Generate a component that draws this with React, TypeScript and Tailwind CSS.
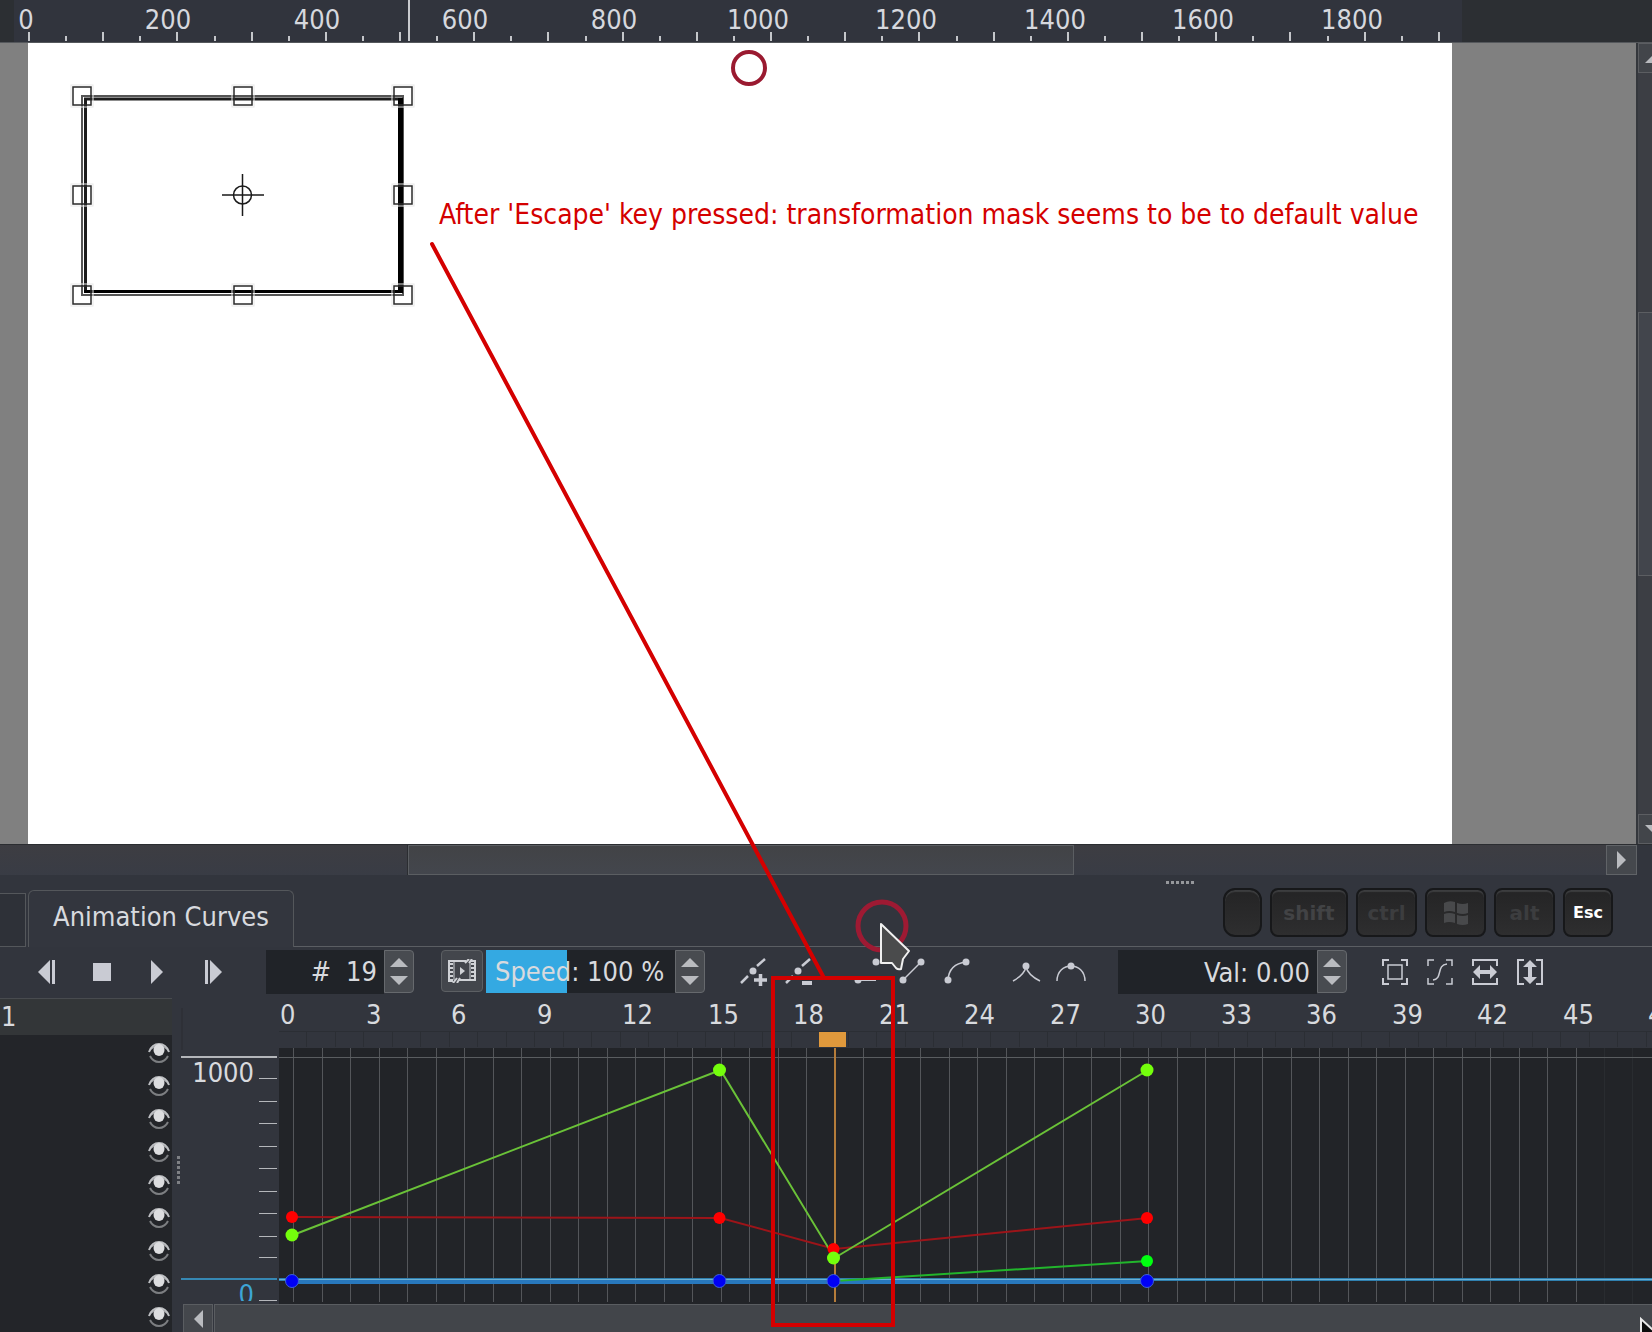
import type { ReactNode } from "react";

const range = (n: number) => Array.from({ length: n }, (_, i) => i);

/* ---------- horizontal canvas ruler ---------- */

const RULER_ORIGIN = 29;
const RULER_STEP = 742 / 20;

function Ruler() {
  return (
    <header className="h-[43px] shrink-0 overflow-hidden border-b border-[#55585c] bg-[#2c2f33]">
      <svg className="block h-full w-full" role="img" aria-label="Horizontal ruler">
        <rect x="14" y="0" width="1448" height="42" fill="#31343d" />
        {range(39).map((i) => {
          const x = Math.round(RULER_ORIGIN + i * RULER_STEP);
          const top = i % 2 === 0 ? 32 : 36;
          return <rect key={i} x={x - 1} y={top} width="2" height={41 - top} fill="#c4c6ca" />;
        })}
        {range(10).map((i) => {
          const value = i * 200;
          const shift = value === 0 ? 3 : value < 1000 ? 9 : 13;
          return (
            <text
              key={value}
              x={Math.round(RULER_ORIGIN + i * 4 * RULER_STEP) - shift}
              y="29"
              textAnchor="middle"
              fill="#d6d8de"
              className="text-[27px]"
            >
              {value}
            </text>
          );
        })}
        <rect x="408" y="0" width="2" height="41" fill="#c9cbcf" />
      </svg>
    </header>
  );
}

/* ---------- canvas ---------- */

function TransformBox() {
  const handles = [
    [82, 96], [243, 96], [403, 96],
    [82, 195], [403, 195],
    [82, 295], [243, 295], [403, 295],
  ];
  return (
    <svg viewBox="28 43 400 280" width="400" height="280" className="absolute top-0 left-0" aria-label="Transformation mask">
      <rect x="82" y="96" width="321" height="199" fill="none" stroke="#555" strokeWidth="2" />
      <path d="M84 99H402" stroke="#1c1c1c" strokeWidth="3" />
      <path d="M85.500 98V293" stroke="#1c1c1c" strokeWidth="3" />
      <path d="M400.500 98V293" stroke="#000" strokeWidth="5" />
      <path d="M84 291.500H402" stroke="#000" strokeWidth="3" />
      {handles.map(([x, y]) => (
        <g key={`${x}-${y}`} fill="none">
          <rect x={x - 11} y={y - 11} width="22" height="22" stroke="#e8e8e8" strokeWidth="1" />
          <rect x={x - 9} y={y - 9} width="18" height="18" stroke="#2a2a2a" strokeWidth="1.500" />
        </g>
      ))}
      <g fill="none" stroke="#1a1a1a" strokeWidth="1.500">
        <circle cx="242.500" cy="195" r="9" />
        <path d="M222 195H264M242.500 174V216" />
      </g>
    </svg>
  );
}

function Triangle({ dir, className }: { dir: "up" | "down" | "left" | "right"; className?: string }) {
  const d = {
    up: "M0 9L9 0L18 9Z",
    down: "M0 0L9 9L18 0Z",
    left: "M9 0L0 9L9 18Z",
    right: "M0 0L9 9L0 18Z",
  }[dir];
  const vertical = dir === "up" || dir === "down";
  return (
    <svg width={vertical ? 18 : 9} height={vertical ? 9 : 18} className={className} aria-hidden="true">
      <path d={d} fill="#b9bbbf" />
    </svg>
  );
}

function Canvas() {
  return (
    <main className="flex min-h-[801px] flex-1 overflow-hidden bg-[#808080]">
      <div className="relative ml-7 w-[1424px] shrink-0 bg-white">
        <TransformBox />
        <p className="absolute top-[156px] left-[411px] text-[28px] leading-8 whitespace-nowrap text-[#d40000]">
          After 'Escape' key pressed: transformation mask seems to be to default value
        </p>
      </div>
      <div className="min-w-0 flex-1" />
      <div className="w-4 shrink-0 overflow-hidden border-l-2 border-[#34373c] bg-[#3c3e44]">
        <div className="flex h-full w-8 flex-col">
          <button type="button" aria-label="Scroll up" className="flex h-[30px] items-center border border-[#5c5e62] bg-[#42454a] pl-[6px]">
            <Triangle dir="up" />
          </button>
          <div className="h-[239px]" />
          <div className="h-[264px] border border-[#5c5e62] bg-[#42454c]" />
          <div className="flex-1" />
          <button type="button" aria-label="Scroll down" className="flex h-[30px] items-center border border-[#5c5e62] bg-[#42454a] pl-[6px]">
            <Triangle dir="down" />
          </button>
        </div>
      </div>
    </main>
  );
}

function CanvasScrollbar() {
  return (
    <div className="flex h-8 shrink-0 border-t border-[#2b2d31] bg-[#32353d] pr-[15px]">
      <div className="flex h-[30px] flex-1 bg-linear-to-b from-[#3d3d42] to-[#393c45]">
        <div className="w-[408px] shrink border-r border-[#2b2d31]" />
        <div className="w-[666px] border border-[#5b5e62] bg-linear-to-b from-[#424346] to-[#43464d]" />
      </div>
      <button type="button" aria-label="Scroll right" className="flex h-[30px] w-[31px] items-center justify-center border border-[#606367] bg-[#45484d]">
        <Triangle dir="right" />
      </button>
    </div>
  );
}

/* ---------- docker tabs and key display ---------- */

function Key({ children, className }: { children?: ReactNode; className: string }) {
  return (
    <kbd
      className={`flex h-[49px] items-center justify-center border-2 border-[#17181a] bg-linear-to-b from-[#242425] to-[#2e2e2f] font-['DejaVu_Sans',sans-serif] font-bold shadow-[inset_0_2px_1px_#3c3d3f] ${className}`}
    >
      {children}
    </kbd>
  );
}

function DockTabs() {
  return (
    <div className="flex h-[71px] shrink-0 items-stretch bg-[#32353d]">
      <div role="tablist" className="flex items-end">
        <button type="button" role="tab" aria-label="Previous panel" className="h-[54px] w-[26px] border-t border-r border-b border-[#54575b] bg-[#2e3138]" />
        <div className="w-[2px]" />
        <button
          type="button"
          role="tab"
          aria-selected="true"
          className="h-[57px] w-[266px] rounded-t-md border border-b-0 border-[#54575b] bg-[#33363e] pb-1 text-[27px] leading-[50px] text-[#d8dade]"
        >
          Animation Curves
        </button>
      </div>
      <div className="flex flex-1 justify-end border-b border-[#5b5e63] pr-[39px]">
        <div className="mt-[5px] mr-[29px] flex h-[3px] gap-[2px]">
          {range(6).map((i) => (
            <span key={i} className="size-[3px] bg-[#96989c]" />
          ))}
        </div>
        <div className="mt-3 flex gap-2">
          <Key className="w-[39px] rounded-xl" />
          <Key className="w-[78px] rounded-lg text-[20px] text-[#424345]">shift</Key>
          <Key className="w-[61px] rounded-lg text-[20px] text-[#3c3d3f]">ctrl</Key>
          <Key className="w-[61px] rounded-lg">
            <svg viewBox="0 0 26 26" width="26" height="26" fill="#48494b" aria-label="Windows">
              <path d="M1 3Q6 0 12 2V12Q6 10 1 12ZM14 3Q20 5 25 3V13Q20 15 14 13ZM1 14Q6 12 12 14V23Q6 21 1 23ZM14 15Q20 17 25 15V24Q20 26 14 24Z" />
            </svg>
          </Key>
          <Key className="w-[61px] rounded-lg text-[20px] text-[#3c3d3f]">alt</Key>
          <Key className="w-[50px] rounded-lg text-[16px] text-white">Esc</Key>
        </div>
      </div>
    </div>
  );
}

/* ---------- toolbar ---------- */

function Spinner({ label }: { label: string }) {
  return (
    <div className="flex h-[43px] w-[30px] shrink-0 flex-col justify-center gap-[9px] rounded-r border border-[#66696d] bg-[#484b50]">
      <button type="button" aria-label={`Increase ${label}`} className="flex justify-center">
        <Triangle dir="up" />
      </button>
      <button type="button" aria-label={`Decrease ${label}`} className="flex justify-center">
        <Triangle dir="down" />
      </button>
    </div>
  );
}

function ToolButton({ label, wide, children }: { label: string; wide?: boolean; children: ReactNode }) {
  return (
    <button type="button" aria-label={label} className={`flex h-[43px] shrink-0 items-center justify-center ${wide ? "w-[55px]" : "w-[45px]"}`}>
      <svg viewBox="0 0 28 28" width="28" height="28" fill="none" stroke="#c9cbd3" strokeWidth="2" className="overflow-visible">
        {children}
      </svg>
    </button>
  );
}

function Dot({ x, y }: { x: number; y: number }) {
  return <circle cx={x} cy={y} r="3.500" fill="#c9cbd3" stroke="none" />;
}

const CORNERS = "M2 8V2H8M20 2H26V8M26 20V26H20M8 26H2V20";

function Toolbar() {
  return (
    <div role="toolbar" className="flex h-[51px] shrink-0 items-start bg-[#32353d] pt-[3px] pl-[19px] text-[27px] text-[#d8dade]">
      <ToolButton wide label="Previous frame">
        <path d="M17 2V26L5 14Z" fill="#c9cbd3" stroke="none" />
        <path d="M20.500 2V26" strokeWidth="3" />
      </ToolButton>
      <ToolButton wide label="Stop">
        <path d="M5 5H23V23H5Z" fill="#c9cbd3" stroke="none" />
      </ToolButton>
      <ToolButton wide label="Play">
        <path d="M8 2L20 14L8 26Z" fill="#c9cbd3" stroke="none" />
      </ToolButton>
      <ToolButton wide label="Next frame">
        <path d="M12 2L24 14L12 26Z" fill="#c9cbd3" stroke="none" />
        <path d="M8.500 2V26" strokeWidth="3" />
      </ToolButton>

      <div className="ml-[27px] flex">
        <label className="flex h-[44px] w-[118px] items-center justify-end bg-[#202328] pr-[7px]">
          #
          <input aria-label="Frame" defaultValue="19" className="w-[46px] bg-transparent text-right outline-none" />
        </label>
        <Spinner label="frame" />
      </div>

      <button type="button" aria-label="Drop frames" className="ml-[27px] flex size-[42px] items-center justify-center rounded border border-[#5c5f63] bg-[#43464c]">
        <svg viewBox="0 0 28 24" width="28" height="24" fill="none" stroke="#d0d2d6">
          <path d="M5 22H1V2H18M23 2H27V21H10" strokeWidth="2" />
          <path d="M3.500 4V21M24.500 4V20" strokeWidth="3" strokeDasharray="2 2" />
          <path d="M6 3V21M22 3V21" strokeWidth="1" />
          <path d="M17 4L21 0M21 4L24 0M5 24L9 19M9 24L12 19" strokeWidth="2" />
          <path d="M12 8L17 12L12 16Z" fill="#d0d2d6" stroke="none" />
        </svg>
      </button>

      <div className="ml-[3px] flex">
        <input
          aria-label="Speed"
          defaultValue="Speed: 100 %"
          className="h-[43px] w-[189px] bg-[linear-gradient(to_right,#34a9e2_81px,#202328_81px)] pl-[9px] outline-none"
        />
        <Spinner label="speed" />
      </div>

      <div className="ml-[25px] flex">
        <ToolButton label="Add keyframe">
          <path d="M2 25L9 18M18 8L26 1" strokeWidth="2.500" />
          <Dot x={14} y={13} />
          <path d="M15 22H28M21.500 16V28" strokeWidth="3.500" />
        </ToolButton>
        <ToolButton label="Remove keyframe">
          <path d="M2 25L9 18M18 8L26 1" strokeWidth="2.500" />
          <Dot x={14} y={13} />
          <path d="M18 25H28" strokeWidth="4" />
        </ToolButton>
      </div>
      <div className="ml-6 flex">
        <ToolButton label="Hold interpolation">
          <path d="M5 22H23" />
          <Dot x={5} y={22} />
          <Dot x={23} y={4} />
        </ToolButton>
        <ToolButton label="Linear interpolation">
          <path d="M5 22L23 4" strokeWidth="1.500" />
          <Dot x={5} y={22} />
          <Dot x={23} y={4} />
        </ToolButton>
        <ToolButton label="Bezier interpolation">
          <path d="M5 22Q6 6 23 4" strokeWidth="1.500" />
          <Dot x={5} y={22} />
          <Dot x={23} y={4} />
        </ToolButton>
      </div>
      <div className="ml-6 flex">
        <ToolButton label="Sharp tangents">
          <path d="M1 23Q12 17 14 9Q16 17 28 23" strokeWidth="1.500" />
          <Dot x={14} y={8} />
        </ToolButton>
        <ToolButton label="Smooth tangents">
          <path d="M0 23C0 3 28 3 28 23" strokeWidth="1.500" />
          <Dot x={14} y={8} />
        </ToolButton>
      </div>

      <div className="ml-[25px] flex">
        <input aria-label="Value" defaultValue="Val: 0.00" className="h-[44px] w-[199px] bg-[#202328] pr-[7px] text-right outline-none" />
        <Spinner label="value" />
      </div>

      <div className="ml-[25px] flex">
        <ToolButton label="Fit view to all">
          <path d={CORNERS} />
          <path d="M7 7H21V21H7Z" strokeWidth="1.500" />
        </ToolButton>
        <ToolButton label="Fit view to curve">
          <path d={CORNERS} strokeWidth="1.500" />
          <path d="M7 22C17 21 10 7 21 6" strokeWidth="1.500" />
        </ToolButton>
        <ToolButton label="Fit width">
          <path d="M2 8V2H26V8M26 20V26H2V20" />
          <path d="M7 14H21" strokeWidth="4" />
          <path d="M2 14L9 7V21ZM26 14L19 7V21Z" fill="#c9cbd3" stroke="none" />
        </ToolButton>
        <ToolButton label="Fit height">
          <path d="M8 2H2V26H8M20 26H26V2H20" />
          <path d="M14 7V21" strokeWidth="4" />
          <path d="M14 2L21 9H7ZM14 26L21 19H7Z" fill="#c9cbd3" stroke="none" />
        </ToolButton>
      </div>
    </div>
  );
}

/* ---------- curve editor ---------- */

function Eye() {
  return (
    <svg viewBox="0 0 24 22" width="24" height="22" aria-hidden="true">
      <path d="M2 10Q12 -6 22 10Q18 5 12 5Q6 5 2 10Z" fill="#9c9ea2" />
      <path d="M2 10Q5 2 12 2Q19 2 22 10" fill="none" stroke="#bdbfc2" strokeWidth="2" />
      <path d="M3 14Q6 20 12 20Q18 20 21 14" fill="none" stroke="#7c7e81" strokeWidth="2" />
      <ellipse cx="12" cy="8" rx="5.500" ry="6" fill="#dcdddf" />
    </svg>
  );
}

function ChannelList() {
  return (
    <div className="w-[172px] shrink-0 overflow-hidden bg-[#232529]">
      <div className="h-[37px] border-t border-[#484b4f] bg-[#333638] pl-[1px] text-[27px] leading-9 text-[#d8dade]">1</div>
      <ul className="flex flex-col items-end gap-[11px] pt-[7px] pr-[1px]">
        {range(9).map((i) => (
          <li key={i} className="h-[22px]">
            <button type="button" aria-label={`Toggle channel ${i + 1}`} className="block">
              <Eye />
            </button>
          </li>
        ))}
      </ul>
    </div>
  );
}

function ValueAxis() {
  const ticks = [80, 103, 125, 148, 170, 193, 215, 238, 259, 302];
  return (
    <svg className="block h-full w-[98px] shrink-0" aria-label="Value axis">
      <path d="M1 10V52" stroke="#2a2c32" />
      <rect x="0" y="58" width="96" height="2" fill="#b4b6ba" />
      {ticks.map((y) => (
        <rect key={y} x="78" y={y} width="18" height="1" fill="#b5b7bb" />
      ))}
      <text x="73" y="84" textAnchor="end" fill="#d8dade" className="text-[27px]">
        1000
      </text>
      <rect x="0" y="280" width="96" height="2" fill="#3688b4" />
      <text x="73" y="306" textAnchor="end" fill="#3da5d5" className="text-[27px]">
        0
      </text>
      <rect x="0" y="303" width="78" height="4" fill="#32353d" />
    </svg>
  );
}

const FRAME_W = 57 / 2;
const frameX = (f: number) => 14 + f * FRAME_W;

const POINTS = {
  red: [[0, 219], [15, 220], [19, 251], [30, 220]],
  lime: [[0, 237], [15, 72], [19, 260], [30, 72]],
  green: [[19, 283], [30, 263]],
  blue: [[0, 283], [15, 283], [19, 283], [30, 283]],
};

const polyline = (pts: number[][]) => pts.map(([f, y]) => `${frameX(f)},${y}`).join(" ");

function Plot() {
  return (
    <svg className="block h-full min-w-0 flex-1" aria-label="Animation curves">
      <path d="M0 33.500H2000" stroke="#2b2e34" />
      {range(50).map((i) => (
        <rect key={i} x={Math.round(frameX(i) + 13)} y="34" width="1" height="15" fill="#2b2e34" />
      ))}
      {range(17).map((i) => (
        <text key={i} x={Math.round(frameX(i * 3)) - 13} y="26" fill="#d8dade" className="text-[27px]">
          {i * 3}
        </text>
      ))}
      <rect x="0" y="50" width="100%" height="256" fill="#222428" />
      {range(46).map((i) => (
        <rect key={i} x={Math.round(frameX(i))} y="50" width="1" height="254" fill="#54565a" />
      ))}
      <rect x="1325" y="50" width="1" height="256" fill="#292c30" />
      <rect x="1353" y="50" width="1" height="256" fill="#292c30" />
      <rect x="0" y="59" width="100%" height="1" fill="#5a5d60" />
      <rect x="0" y="280" width="100%" height="3" fill="#2f7fae" />
      <rect x={frameX(0)} y="282" width={frameX(30) - frameX(0)} height="4" fill="#2878bd" />
      <rect x="0" y="281" width="100%" height="1" fill="#6bb0d4" />
      <rect x="540" y="34" width="27" height="15" fill="#e0993c" />
      <rect x={Math.round(frameX(19)) - 1} y="50" width="2" height="254" fill="#b57c3a" />
      <polyline points={polyline(POINTS.red)} fill="none" stroke="#9c1419" strokeWidth="2" />
      <polyline points={polyline(POINTS.green)} fill="none" stroke="#22b52c" strokeWidth="2" />
      <polyline points={polyline(POINTS.lime)} fill="none" stroke="#6ac238" strokeWidth="2" />
      {POINTS.red.map(([f, y]) => (
        <circle key={f} cx={frameX(f) - 1} cy={y} r="6" fill="#ff0000" />
      ))}
      <circle cx={frameX(30) - 1} cy="263" r="6" fill="#00ff10" />
      {POINTS.lime.map(([f, y]) => (
        <circle key={f} cx={frameX(f) - 1} cy={y} r="6.500" fill="#74ff0c" />
      ))}
      {POINTS.blue.map(([f, y]) => (
        <circle key={f} cx={frameX(f) - 1} cy={y} r="6.500" fill="#0000f5" stroke="#3d60d8" />
      ))}
    </svg>
  );
}

function CurveEditor() {
  return (
    <section className="flex h-[334px] shrink-0 bg-[#32353d]">
      <ChannelList />
      <div className="flex w-[9px] shrink-0 flex-col items-end justify-center gap-[2px] pt-[10px] pr-[1px]">
        {range(6).map((i) => (
          <span key={i} className="size-[3px] bg-[#7e8084]" />
        ))}
      </div>
      <div className="flex min-w-0 flex-1 flex-col">
        <div className="flex h-[306px] overflow-hidden">
          <ValueAxis />
          <Plot />
        </div>
        <div className="flex h-7 overflow-hidden pl-[2px]">
          <button type="button" aria-label="Scroll left" className="flex w-[30px] items-center justify-center border border-b-0 border-[#5a5d61] bg-[#44474c]">
            <Triangle dir="left" />
          </button>
          <div className="ml-px flex-1 border-t border-l border-[#5a5d61] bg-[#42454a]" />
        </div>
      </div>
    </section>
  );
}

/* ---------- pointer and markup drawn above the window ---------- */

function Markup() {
  return (
    <svg className="pointer-events-none absolute inset-0 h-full w-full" aria-hidden="true">
      <circle cx="749" cy="68" r="16" fill="none" stroke="#9a1a30" strokeWidth="4" />
      <circle cx="882" cy="926" r="24" fill="none" stroke="#9e1a33" strokeWidth="5" />
      <path d="M881 924V963H892L896 968Q898 970 901 969L903 959L909 951Z" fill="#4a4b4c" stroke="#f0f0f0" strokeWidth="2" strokeLinejoin="round" />
      <path d="M1641 1319V1350L1665 1341Z" fill="#0c0c0c" stroke="#e8e8e8" strokeWidth="2" />
      <path d="M432 244L824 978" stroke="#d40000" strokeWidth="4" strokeLinecap="round" />
      <rect x="773" y="978" width="120" height="347" fill="none" stroke="#d40000" strokeWidth="4" />
    </svg>
  );
}

export default function App() {
  return (
    <div className="relative flex min-h-screen flex-col overflow-hidden bg-[#32353d] font-['DejaVu_Sans_Condensed','DejaVu_Sans',sans-serif]">
      <Ruler />
      <Canvas />
      <CanvasScrollbar />
      <DockTabs />
      <Toolbar />
      <CurveEditor />
      <Markup />
    </div>
  );
}
